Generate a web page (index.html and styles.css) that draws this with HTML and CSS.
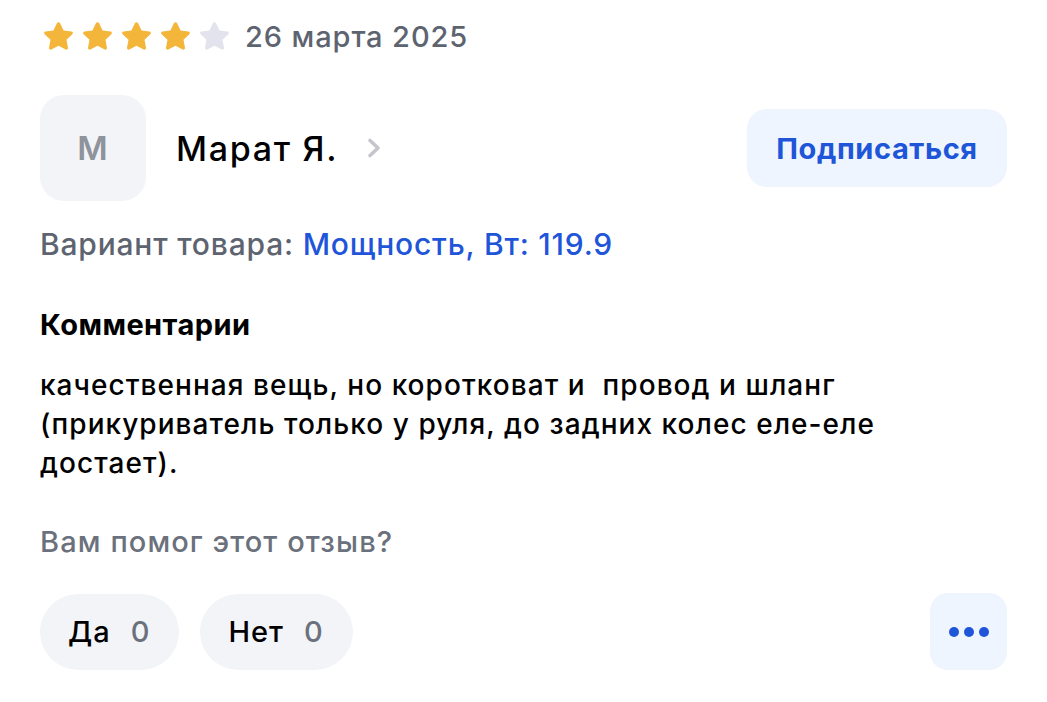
FILE: index.html
```html
<!DOCTYPE html>
<html lang="ru">
<head>
<meta charset="utf-8">
<link rel="stylesheet" href="styles.css">
</head>
<body>
<div class="review">
  <div class="rating-row">
    <div class="stars">
      <svg class="star on" viewBox="0 0 24 24"><path d="M12 2.2c.5 0 .9.3 1.1.7l2.4 5 5.4.7c.9.1 1.3 1.3.6 1.9l-4 3.8 1 5.4c.2.9-.8 1.6-1.6 1.2L12 18.3l-4.9 2.6c-.8.4-1.8-.3-1.6-1.2l1-5.4-4-3.8c-.7-.6-.3-1.8.6-1.9l5.4-.7 2.4-5c.2-.4.6-.7 1.1-.7z"/></svg>
      <svg class="star on" viewBox="0 0 24 24"><path d="M12 2.2c.5 0 .9.3 1.1.7l2.4 5 5.4.7c.9.1 1.3 1.3.6 1.9l-4 3.8 1 5.4c.2.9-.8 1.6-1.6 1.2L12 18.3l-4.9 2.6c-.8.4-1.8-.3-1.6-1.2l1-5.4-4-3.8c-.7-.6-.3-1.8.6-1.9l5.4-.7 2.4-5c.2-.4.6-.7 1.1-.7z"/></svg>
      <svg class="star on" viewBox="0 0 24 24"><path d="M12 2.2c.5 0 .9.3 1.1.7l2.4 5 5.4.7c.9.1 1.3 1.3.6 1.9l-4 3.8 1 5.4c.2.9-.8 1.6-1.6 1.2L12 18.3l-4.9 2.6c-.8.4-1.8-.3-1.6-1.2l1-5.4-4-3.8c-.7-.6-.3-1.8.6-1.9l5.4-.7 2.4-5c.2-.4.6-.7 1.1-.7z"/></svg>
      <svg class="star on" viewBox="0 0 24 24"><path d="M12 2.2c.5 0 .9.3 1.1.7l2.4 5 5.4.7c.9.1 1.3 1.3.6 1.9l-4 3.8 1 5.4c.2.9-.8 1.6-1.6 1.2L12 18.3l-4.9 2.6c-.8.4-1.8-.3-1.6-1.2l1-5.4-4-3.8c-.7-.6-.3-1.8.6-1.9l5.4-.7 2.4-5c.2-.4.6-.7 1.1-.7z"/></svg>
      <svg class="star off" viewBox="0 0 24 24"><path d="M12 2.2c.5 0 .9.3 1.1.7l2.4 5 5.4.7c.9.1 1.3 1.3.6 1.9l-4 3.8 1 5.4c.2.9-.8 1.6-1.6 1.2L12 18.3l-4.9 2.6c-.8.4-1.8-.3-1.6-1.2l1-5.4-4-3.8c-.7-.6-.3-1.8.6-1.9l5.4-.7 2.4-5c.2-.4.6-.7 1.1-.7z"/></svg>
    </div>
    <span class="date">26 марта 2025</span>
  </div>

  <div class="author-row">
    <div class="author">
      <div class="avatar">М</div>
      <span class="name">Марат Я.</span>
      <svg class="chevron" viewBox="0 0 16 22"><path d="M4 3.5l8 7.5-8 7.5" fill="none" stroke="#c4c6cc" stroke-width="3.6" stroke-linecap="round" stroke-linejoin="round"/></svg>
    </div>
    <button class="subscribe">Подписаться</button>
  </div>

  <p class="variant">Вариант товара: <span class="variant-value">Мощность, Вт: 119.9</span></p>

  <h3 class="section-title">Комментарии</h3>
  <p class="comment">качественная вещь, но коротковат и&nbsp; провод и шланг<br>(прикуриватель только у руля, до задних колес еле-еле<br>достает).</p>

  <p class="helpful">Вам помог этот отзыв?</p>

  <div class="actions">
    <div class="votes">
      <button class="vote">Да <span class="count">0</span></button>
      <button class="vote">Нет <span class="count">0</span></button>
    </div>
    <button class="more"><span class="dot"></span><span class="dot"></span><span class="dot"></span></button>
  </div>
</div>
</body>
</html>
```

FILE: styles.css
```css
* { box-sizing: border-box; }
html, body { margin: 0; padding: 0; background: #fff; }
body {
  font-family: "Inter", "Noto Sans", sans-serif;
  color: #0b0b0b;
}
.review {
  padding: 19px 40px 0 40px;
}
.rating-row {
  display: flex;
  align-items: center;
  height: 34px;
}
.stars {
  display: flex;
  gap: 4px;
  margin-left: 1px;
}
.star { width: 35px; height: 35px; }
.star.on { fill: #f4b63a; }
.star.off { fill: #e2e3ec; }
.date {
  margin-left: 13px;
  font-size: 29px;
  font-weight: 500;
  color: #5d6470;
  letter-spacing: 0.9px;
}
.author-row {
  margin-top: 42px;
  display: flex;
  align-items: center;
  justify-content: space-between;
}
.author {
  display: flex;
  align-items: center;
}
.avatar {
  width: 106px;
  height: 106px;
  border-radius: 24px;
  background: #f3f4f8;
  display: flex;
  align-items: center;
  justify-content: center;
  font-size: 33px;
  font-weight: 600;
  color: #8e939c;
  letter-spacing: 1px;
}
.name {
  margin-left: 30px;
  font-size: 34px;
  font-weight: 500;
  color: #000;
  letter-spacing: 1.7px;
}
.chevron {
  width: 16px;
  height: 22px;
  margin-left: 28px;
}
.subscribe {
  width: 260px;
  height: 78px;
  border: none;
  border-radius: 20px;
  background: #eef5fe;
  color: #1f55d9;
  font-family: inherit;
  font-size: 29px;
  font-weight: 700;
  letter-spacing: 0.6px;
}
.variant {
  margin: 24px 0 0 0;
  font-size: 30px;
  font-weight: 500;
  color: #5d6470;
  line-height: 38px;
  letter-spacing: 0.8px;
}
.variant-value { color: #1f55d9; }
.section-title {
  margin: 44px 0 0 0;
  font-size: 29px;
  font-weight: 700;
  line-height: 36px;
  color: #000;
  letter-spacing: 0.45px;
}
.comment {
  margin: 23px 0 0 0;
  font-size: 28px;
  font-weight: 500;
  line-height: 39px;
  color: #000;
  letter-spacing: 1.05px;
}
.helpful {
  margin: 41px 0 0 0;
  font-size: 29px;
  font-weight: 500;
  line-height: 36px;
  color: #6b717c;
  letter-spacing: 1.1px;
}
.actions {
  margin-top: 33px;
  display: flex;
  align-items: center;
  justify-content: space-between;
}
.votes {
  display: flex;
  gap: 21px;
}
.vote {
  height: 76px;
  padding: 0 29px 0 28px;
  border: none;
  border-radius: 38px;
  background: #f3f4f8;
  font-family: inherit;
  font-size: 29px;
  font-weight: 500;
  color: #000;
  display: flex;
  align-items: center;
  gap: 20px;
  letter-spacing: 1px;
}
.count { color: #6b717c; }
.more {
  width: 77px;
  height: 77px;
  border: none;
  border-radius: 18px;
  background: #eef5fe;
  display: flex;
  align-items: center;
  justify-content: center;
  gap: 5px;
}
.dot {
  width: 10px;
  height: 10px;
  border-radius: 50%;
  background: #1f55d9;
}
```
